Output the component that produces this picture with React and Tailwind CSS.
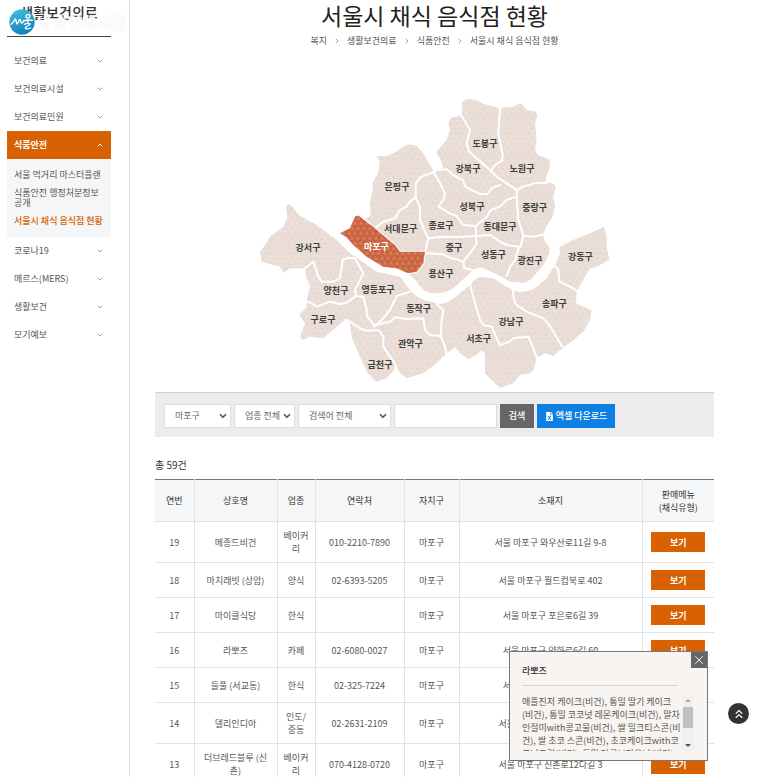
import React, { useState } from 'react';
import { ChevronDown, ChevronUp, ChevronRight, ChevronsUp, X } from 'lucide-react';
import { FaFileExcel } from 'react-icons/fa';

const MENU_TOP = ['보건의료', '보건의료시설', '보건의료민원'];
const MENU_BOTTOM = ['코로나19', '메르스(MERS)', '생활보건', '모기예보'];
const BREADCRUMB = ['복지', '생활보건의료', '식품안전', '서울시 채식 음식점 현황'];

const ROWS = [
  { no: 19, name: '메종드비건', type: '베이커리', tel: '010-2210-7890', addr: '서울 마포구 와우산로11길 9-8' },
  { no: 18, name: '마치래빗 (상암)', type: '양식', tel: '02-6393-5205', addr: '서울 마포구 월드컵북로 402' },
  { no: 17, name: '마이클식당', type: '한식', tel: '', addr: '서울 마포구 포은로6길 39' },
  { no: 16, name: '라뽀즈', type: '카페', tel: '02-6080-0027', addr: '서울 마포구 양화로6길 60' },
  { no: 15, name: '들풀 (서교동)', type: '한식', tel: '02-325-7224', addr: '서울 마포구 동교로8길 14' },
  { no: 14, name: '델리인디아', type: '인도/중동', tel: '02-2631-2109', addr: '서울 마포구 월드컵북로 396' },
  { no: 13, name: '더브레드블루 (신촌)', type: '베이커리', tel: '070-4128-0720', addr: '서울 마포구 신촌로12다길 3' },
];

const MENU_LINES = [
  '애플진저 케이크(비건), 통밀 딸기 케이크',
  '(비건), 통밀 코코넛 레몬케이크(비건), 말차',
  '인절미with콩고물(비건), 쌀 밀크티스콘(비',
  '건), 쌀 초코 스콘(비건), 초코케이크with코',
  '코넛크림(비건), 통밀 당근브라우니(비건)',
];

// 한강 이북 / 이남 외곽선
const NORTH =
  'M270 430L300 415L315 380Q322 374 330 378L345 386L362 378L360 340L368 300L368 278L384 250L390 215L380 200Q385 196 405 199L430 190L460 170Q480 158 500 168L520 190L540 225L552 245L580 235L570 205Q556 190 562 182L590 150L600 120L595 100Q600 82 610 82L635 76L637 60L635 40Q645 26 660 28L680 30L700 42L740 52L750 60L760 52L790 50Q810 36 818 44L830 60L858 65L862 80L855 100L860 150L855 180Q862 198 880 200L898 210L900 230L890 255L885 280Q910 274 917 292L910 320L915 350L905 385L885 415L880 440L885 455L898 470L898 490L880 525L850 560Q835 578 815 578L780 575L750 558L700 535Q685 528 670 540L660 550L610 595Q590 608 570 610L540 608Q520 605 500 575L475 550L440 535L400 530L350 500L310 465L290 442Z';
const SOUTH =
  'M108 350Q114 336 125 348L150 378L200 405L260 450L300 490L340 517L380 545L450 560L480 600Q500 625 530 632L570 642L585 640Q605 630 615 622L660 585Q678 562 692 560L730 565L770 590Q795 606 815 605Q840 604 855 595L890 565L915 525L930 490L928 472L970 450L1020 430L1062 410L1070 440L1070 470L1078 510L1040 530L1020 535L1005 560L980 605L978 640L1000 650L1025 660L1020 690L1000 725L970 750L950 765L925 785L910 798L885 790L860 805L850 840L840 850L810 855L790 880L750 893L730 875L705 850L705 790L695 780L680 795L655 808L630 790L615 772L585 795L560 820L520 850L470 865L450 850L437 825L430 842L410 865L378 875L350 845L330 800L305 740L300 700L285 690L250 720L220 745L180 740L157 750L150 740L165 700L148 675L170 650L172 620L180 590L168 560L165 535L120 535L100 548L90 530L35 515L30 485L45 465L60 440L100 410L112 385Z';
const MAPO =
  'M270 430L300 415L315 380Q322 374 330 380L375 415L410 445L435 465L450 485L525 485L520 520L500 545L475 550L440 535L400 530L350 500L310 465L290 442Z';

const BORDERS = [
  'M330 378L375 415L410 445L435 465L450 485L525 485',
  'M375 415L400 395L435 385L450 360L470 350L480 335L497 322L497 280L510 262L550 247',
  'M497 322L510 350L510 390L535 445L525 485L520 520L500 545L475 550',
  'M535 445L570 441L640 440L678 438',
  'M550 245L570 280L585 310L580 330L565 350L600 370L620 378L640 405L678 408',
  'M565 240L590 238L610 255L640 272L645 290L690 312L712 312L725 295L750 284',
  'M635 78L660 120L650 160L656 183L680 205L720 240L740 260L800 300',
  'M750 60L745 130L758 195L756 212L735 225L722 245',
  'M800 300L820 290L860 278L890 280',
  'M800 300L800 320L770 330L750 350L722 360L710 380L678 408L678 440L680 460L660 490L640 515L643 535L668 540',
  'M800 320L802 350L805 390L820 435L812 470',
  'M820 437L850 440L885 432',
  'M678 438L722 435L750 455L770 465L808 470L795 510L780 530L770 558',
  'M525 489L580 493L600 503L620 508L640 515',
  'M165 535L190 515L205 560L215 575L250 575L270 565L278 510L295 503L315 505L340 550L315 600L318 618',
  'M170 635L185 640L200 650L240 635L270 642L290 638L318 618L340 620L350 660L352 680L375 708',
  'M287 688L300 695L330 715L350 722L385 720L400 740L400 770L420 800L437 825',
  'M480 605L440 618L432 635L420 660L395 690L372 710',
  'M372 710L385 703L420 695L435 682L470 687L520 685L525 720L540 735L573 738',
  'M560 642L580 660L575 690L572 738L585 770L590 795',
  'M660 583L675 640L690 690L700 705L725 710L740 745L750 765L780 755L790 745L835 740L850 775L862 808',
  'M788 600L792 630L800 645L830 665L880 685L898 705L910 725L937 770',
  'M910 522L925 540L928 575L960 590L985 605',
];

const DISTRICTS = [
  ['도봉구', 705, 159], ['강북구', 654, 234], ['노원구', 816, 234], ['은평구', 441, 288],
  ['성북구', 666, 348], ['중랑구', 854, 352], ['서대문구', 452, 416], ['종로구', 573, 405],
  ['동대문구', 750, 408], ['강서구', 174, 471], ['마포구', 379, 470], ['중구', 612, 472],
  ['성동구', 730, 494], ['광진구', 840, 511], ['강동구', 991, 498], ['양천구', 258, 601],
  ['영등포구', 384, 598], ['용산구', 573, 550], ['동작구', 506, 656], ['송파구', 913, 641],
  ['구로구', 219, 687], ['강남구', 783, 693], ['관악구', 481, 761], ['서초구', 686, 746],
  ['금천구', 390, 822],
];

const SeoulMap = () => (
  <svg viewBox="0 0 1110 900" className="mx-auto block w-[370px] max-w-full" role="img" aria-label="서울시 자치구 지도">
    <defs>
      <pattern id="tri" width="18" height="30" patternUnits="userSpaceOnUse">
        <rect width="18" height="30" fill="#ebdfd9" />
        <path d="M2 14L9 2L16 14ZM-7 29L0 17L7 29ZM11 29L18 17L25 29Z" fill="#e8d9d2" />
      </pattern>
      <pattern id="tri-on" width="18" height="30" patternUnits="userSpaceOnUse">
        <rect width="18" height="30" fill="#c96442" />
        <path d="M2 14L9 2L16 14ZM-7 29L0 17L7 29ZM11 29L18 17L25 29Z" fill="#d67c58" />
      </pattern>
    </defs>
    <path d={NORTH} fill="url(#tri)" />
    <path d={SOUTH} fill="url(#tri)" />
    <g fill="none" stroke="#fff" strokeWidth="6" strokeLinejoin="round" strokeLinecap="round">
      {BORDERS.map(d => <path key={d} d={d} />)}
    </g>
    <path d={MAPO} fill="url(#tri-on)" />
    <g fontSize="27" fontWeight="700" textAnchor="middle">
      {DISTRICTS.map(([name, x, y]) => (
        <text key={name} x={x} y={y + 11} fill={name === '마포구' ? '#ffffff' : '#404040'}>{name}</text>
      ))}
    </g>
  </svg>
);

const Logo = () => (
  <div className="absolute left-[9px] top-[9px] flex items-center gap-[2px]">
    <svg viewBox="0 0 78 78" className="size-[26px] shrink-0" aria-hidden="true">
      <defs>
        <linearGradient id="logo-bg" x1="0" y1="0" x2="0.4" y2="1">
          <stop offset="0" stopColor="#47bfe4" />
          <stop offset="1" stopColor="#1285bd" />
        </linearGradient>
      </defs>
      <circle cx="39" cy="39" r="38" fill="url(#logo-bg)" />
      <g fill="none" stroke="#fff" strokeWidth="4" strokeLinecap="round" strokeLinejoin="round">
        <path d="M5 46C12 44 15 34 19 30C22 30 21 44 24 45C28 43 29 32 33 31C36 34 34 41 38 42C42 42 44 37 45 34" />
        <path d="M58 16C49 16 48 27 56 27C65 27 65 17 58 16" />
        <path d="M43 36C52 33 62 32 71 34M57 35L56 43" />
        <path d="M46 46C52 43 61 43 64 45C61 50 51 52 49 56C48 61 58 60 65 57" />
      </g>
    </svg>
    <span className="whitespace-nowrap text-[15px] font-bold leading-6 text-white [text-shadow:0_0_2px_#e5e5e5]">내 손안에 서울</span>
  </div>
);

const MenuItem = ({ label }) => (
  <li>
    <a href="#" className="flex h-7 items-center justify-between px-[7px]">
      {label}
      <ChevronDown size={8} strokeWidth={3} className="text-gray-400" />
    </a>
  </li>
);

const Select = ({ label, text, width }) => (
  <div className={`relative ${width}`}>
    <select aria-label={label} className="h-6 w-full appearance-none border border-[#dddddd] bg-white pl-[10px] text-[9px] text-[#666666] outline-none">
      <option>{text}</option>
    </select>
    <ChevronDown size={10} strokeWidth={4} className="pointer-events-none absolute right-[3px] top-[7px] text-[#555555]" />
  </div>
);

const Sidebar = () => (
  <aside className="w-[130px] shrink-0 border-r border-[#dddddd] pl-[7px] pr-[18px] text-[9px] text-[#555555]">
    <h2 className="h-[37px] border-b border-[#444444] pt-[2px] text-center text-[14px] font-medium leading-5 text-[#333333]">생활보건의료</h2>
    <ul className="mt-[10px]">
      {MENU_TOP.map(label => <MenuItem key={label} label={label} />)}
      <li>
        <a href="#" className="flex h-7 items-center justify-between bg-[#d86202] px-[7px] font-bold text-white">
          식품안전
          <ChevronUp size={8} strokeWidth={3} />
        </a>
        <ul className="flex h-[78px] flex-col justify-center gap-2 bg-[#f5f6f7] px-[7px] leading-[10px]">
          <li><a href="#" className="block whitespace-nowrap">서울 먹거리 마스터플랜</a></li>
          <li><a href="#" className="block">식품안전 행정처분정보<br />공개</a></li>
          <li><a href="#" className="block whitespace-nowrap font-medium text-[#d86202]">서울시 채식 음식점 현황</a></li>
        </ul>
      </li>
      {MENU_BOTTOM.map(label => <MenuItem key={label} label={label} />)}
    </ul>
  </aside>
);

const MenuPopup = ({ onClose }) => (
  <div role="dialog" aria-label="판매메뉴" className="fixed bottom-4 right-[52px] h-[110px] w-[199px] border border-[#777777] bg-[#f8f4f1] pl-3 pr-[13px] pt-3 text-[9px] text-[#555555]">
    <button type="button" onClick={onClose} aria-label="닫기" className="absolute right-0 top-0 flex size-4 items-center justify-center bg-[#666666] text-white">
      <X size={14} strokeWidth={1.5} />
    </button>
    <h3 className="mr-4 h-[22px] border-b border-[#d9d4d0] font-medium leading-[14px] text-[#333333]">라뽀즈</h3>
    <div className="mt-[9px] flex h-14 justify-between">
      <p className="overflow-hidden whitespace-nowrap leading-[13px]">
        {MENU_LINES.map(line => <span key={line} className="block">{line}</span>)}
      </p>
      <div className="flex w-3 shrink-0 flex-col items-center justify-between bg-[#f1f1f1] py-1">
        <span className="border-x-[3px] border-b-[3px] border-x-transparent border-b-[#a3a3a3]" />
        <span className="mb-3 h-[21px] w-[10px] bg-[#c1c1c1]" />
        <span className="border-x-[3px] border-t-[3px] border-x-transparent border-t-[#505050]" />
      </div>
    </div>
  </div>
);

const App = () => {
  const [popupOpen, setPopupOpen] = useState(true);

  return (
    <div className="relative flex min-h-screen bg-white font-['Noto_Sans_CJK_KR','Noto_Sans',sans-serif]">
      <Sidebar />
      <Logo />

      <main className="min-w-0 flex-1 pl-[25px] pr-[46px]">
        <h1 className="text-center text-[23px] font-normal leading-[30px] text-[#222222]">서울시 채식 음식점 현황</h1>
        <nav aria-label="breadcrumb" className="mt-[5px] flex h-3 items-center justify-center gap-[6px] text-[9px] text-[#555555]">
          {BREADCRUMB.map((item, i) => (
            <React.Fragment key={item}>
              {i > 0 && <ChevronRight size={8} strokeWidth={3} className="text-gray-400" />}
              <a href="#">{item}</a>
            </React.Fragment>
          ))}
        </nav>

        <div className="mt-[43px]">
          <SeoulMap />
        </div>

        <form onSubmit={e => e.preventDefault()} className="mt-[2px] flex gap-[3px] border-t border-[#d0d0d0] bg-[#ececec] pb-[9px] pl-[9px] pt-[11px] text-[9px]">
          <Select label="자치구" text="마포구" width="w-[67px]" />
          <Select label="업종" text="업종 전체" width="w-[61px]" />
          <Select label="검색어" text="검색어 전체" width="w-[93px]" />
          <input type="text" aria-label="검색어 입력" className="h-6 w-[103px] border border-[#dddddd] bg-white px-2 outline-none" />
          <button type="submit" className="h-6 w-[34px] bg-[#666666] font-medium text-white">검색</button>
          <button type="button" className="flex h-6 w-[78px] items-center justify-center gap-[2px] whitespace-nowrap bg-[#0f80e3] font-medium text-white">
            <FaFileExcel size={9} />
            엑셀 다운로드
          </button>
        </form>

        <p className="mt-5 text-[10px] leading-4 text-[#333333]">총 59건</p>

        <table className="mt-[6px] w-full table-fixed border-collapse border-t border-[#777777] text-center text-[9px] leading-[13px] text-[#555555]">
          <thead>
            <tr className="h-[42px] border-b border-[#e0e3e6] bg-[#f5f6f7] text-[#333333]">
              <th className="w-[39px] border-r border-[#e0e3e6] font-normal">연번</th>
              <th className="w-[83px] border-r border-[#e0e3e6] font-normal">상호명</th>
              <th className="w-[38px] border-r border-[#e0e3e6] font-normal">업종</th>
              <th className="w-[89px] border-r border-[#e0e3e6] font-normal">연락처</th>
              <th className="w-[55px] border-r border-[#e0e3e6] font-normal">자치구</th>
              <th className="border-r border-[#e0e3e6] font-normal">소재지</th>
              <th className="w-[72px] font-normal">판매메뉴<br />(채식유형)</th>
            </tr>
          </thead>
          <tbody>
            {ROWS.map(row => (
              <tr key={row.no} className="border-b border-[#e0e3e6]">
                <td className="border-r border-[#e0e3e6]">{row.no}</td>
                <td className="border-r border-[#e0e3e6] px-2 py-[7px]">{row.name}</td>
                <td className="border-r border-[#e0e3e6] px-[5px] py-[7px]">{row.type}</td>
                <td className="border-r border-[#e0e3e6]">{row.tel}</td>
                <td className="border-r border-[#e0e3e6]">마포구</td>
                <td className="border-r border-[#e0e3e6]">{row.addr}</td>
                <td className="px-2 py-[7px]">
                  <button type="button" onClick={() => setPopupOpen(true)} className="mx-auto block h-5 w-[54px] bg-[#d86202] font-bold text-white">보기</button>
                </td>
              </tr>
            ))}
          </tbody>
        </table>
      </main>

      {popupOpen && <MenuPopup onClose={() => setPopupOpen(false)} />}
      <button type="button" aria-label="맨 위로" onClick={() => window.scrollTo({ top: 0 })} className="fixed bottom-[53px] right-[11px] flex size-[21px] items-center justify-center rounded-full bg-[#333333] text-white">
        <ChevronsUp size={14} strokeWidth={2} />
      </button>
    </div>
  );
};

export default App;
